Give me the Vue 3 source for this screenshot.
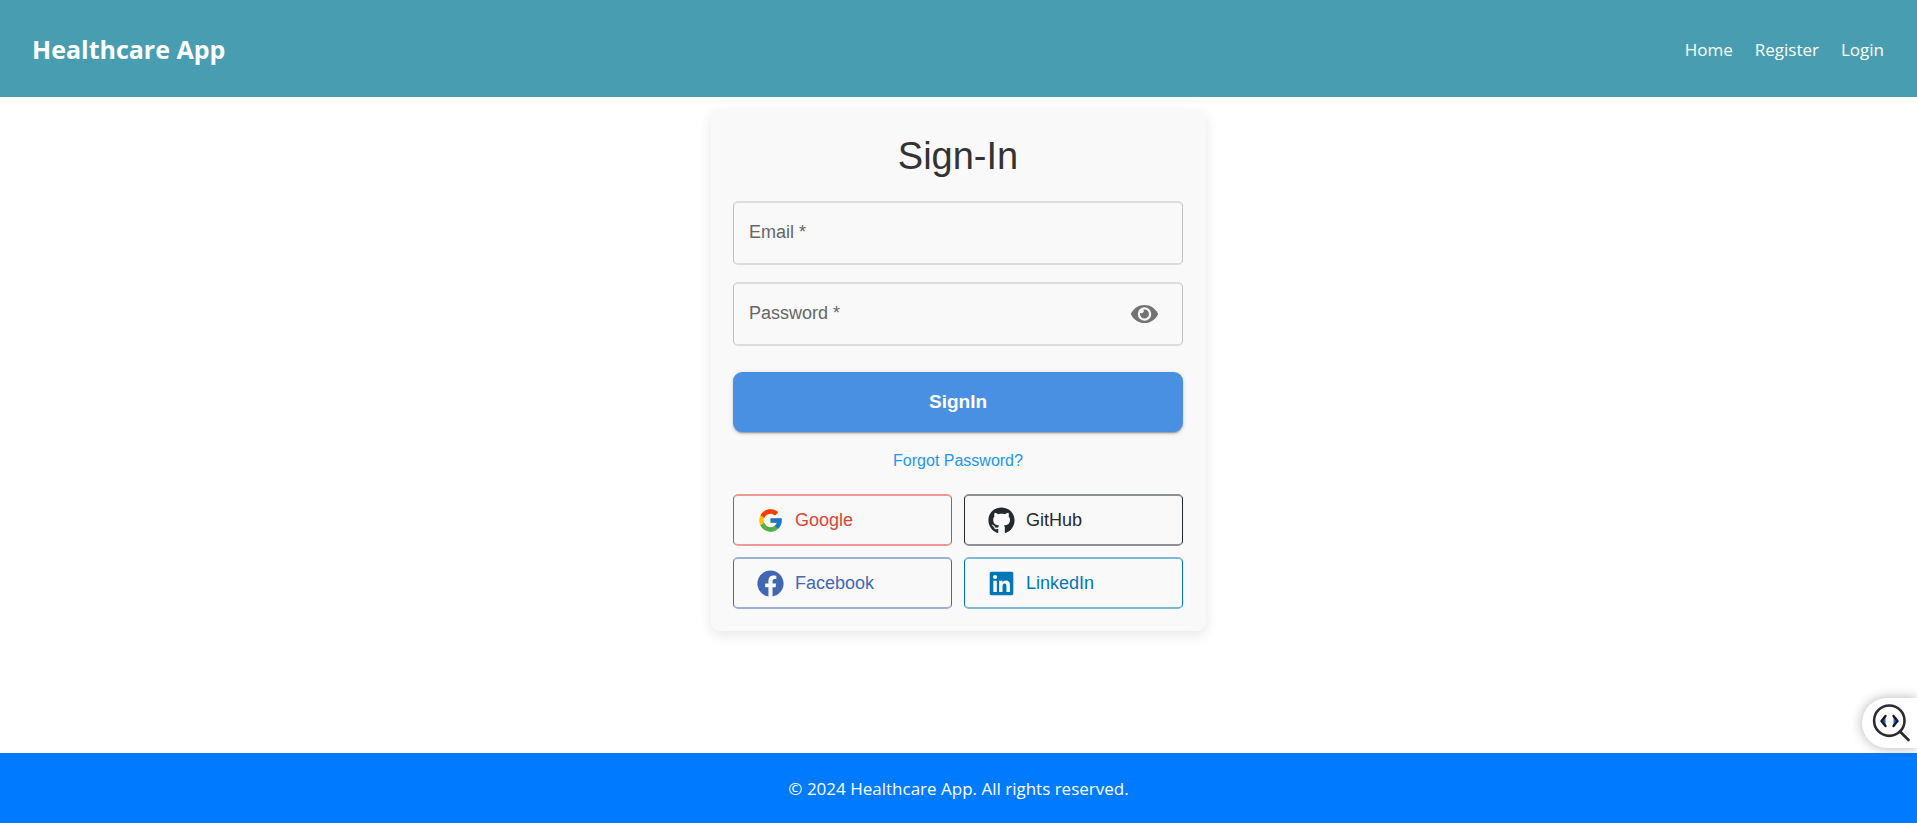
<script setup>
import { ref } from 'vue'

const email = ref('')
const password = ref('')
const showPassword = ref(false)

const links = ['Home', 'Register', 'Login']

const providers = [
  {
    id: 'google',
    name: 'Google',
    viewBox: '0 0 48 48',
    paths: [
      { fill: '#FFC107', d: 'M43.611,20.083H42V20H24v8h11.303c-1.649,4.657-6.08,8-11.303,8c-6.627,0-12-5.373-12-12c0-6.627,5.373-12,12-12c3.059,0,5.842,1.154,7.961,3.039l5.657-5.657C34.046,6.053,29.268,4,24,4C12.955,4,4,12.955,4,24c0,11.045,8.955,20,20,20c11.045,0,20-8.955,20-20C44,22.659,43.862,21.35,43.611,20.083z' },
      { fill: '#FF3D00', d: 'M6.306,14.691l6.571,4.819C14.655,15.108,18.961,12,24,12c3.059,0,5.842,1.154,7.961,3.039l5.657-5.657C34.046,6.053,29.268,4,24,4C16.318,4,9.656,8.337,6.306,14.691z' },
      { fill: '#4CAF50', d: 'M24,44c5.166,0,9.86-1.977,13.409-5.192l-6.19-5.238C29.211,35.091,26.715,36,24,36c-5.202,0-9.619-3.317-11.283-7.946l-6.522,5.025C9.505,39.556,16.227,44,24,44z' },
      { fill: '#1976D2', d: 'M43.611,20.083H42V20H24v8h11.303c-0.792,2.237-2.231,4.166-4.087,5.571c0.001-0.001,0.002-0.001,0.003-0.002l6.19,5.238C36.971,39.205,44,34,44,24C44,22.659,43.862,21.35,43.611,20.083z' }
    ]
  },
  {
    id: 'github',
    name: 'GitHub',
    viewBox: '0 0 496 512',
    paths: [
      { fill: 'currentColor', d: 'M165.9 397.4c0 2-2.3 3.6-5.2 3.6-3.3.3-5.6-1.3-5.6-3.6 0-2 2.3-3.6 5.2-3.6 3-.3 5.6 1.3 5.6 3.6zm-31.1-4.5c-.7 2 1.3 4.3 4.3 4.9 2.6 1 5.6 0 6.2-2s-1.3-4.3-4.3-5.2c-2.6-.7-5.5.3-6.2 2.3zm44.2-1.7c-2.9.7-4.9 2.6-4.6 4.9.3 2 2.9 3.3 5.9 2.6 2.9-.7 4.9-2.6 4.6-4.6-.3-1.9-3-3.2-5.9-2.9zM244.8 8C106.1 8 0 113.3 0 252c0 110.9 69.8 205.8 169.5 239.2 12.8 2.3 17.3-5.6 17.3-12.1 0-6.2-.3-40.4-.3-61.4 0 0-70 15-84.7-29.8 0 0-11.4-29.1-27.8-36.6 0 0-22.9-15.7 1.6-15.4 0 0 24.9 2 38.6 25.8 21.9 38.6 58.6 27.5 72.9 20.9 2.3-16 8.8-27.1 16-33.7-55.9-6.2-112.3-14.3-112.3-110.5 0-27.5 7.6-41.3 23.6-58.9-2.6-6.5-11.1-33.3 2.6-67.9 20.9-6.5 69 27 69 27 20-5.6 41.5-8.5 62.8-8.5s42.8 2.9 62.8 8.5c0 0 48.1-33.6 69-27 13.7 34.7 5.2 61.4 2.6 67.9 16 17.7 25.8 31.5 25.8 58.9 0 96.5-58.9 104.2-114.8 110.5 9.2 7.9 17 22.9 17 46.4 0 33.7-.3 75.4-.3 83.6 0 6.5 4.6 14.4 17.3 12.1C428.2 457.8 496 362.9 496 252 496 113.3 383.5 8 244.8 8zM97.2 352.9c-1.3 1-1 3.3.7 5.2 1.6 1.6 3.9 2.3 5.2 1 1.3-1 1-3.3-.7-5.2-1.6-1.6-3.9-2.3-5.2-1zm-10.8-8.1c-.7 1.3.3 2.9 2.3 3.9 1.6 1 3.6.7 4.3-.7.7-1.3-.3-2.9-2.3-3.9-2-.6-3.6-.3-4.3.7zm32.4 35.6c-1.6 1.3-1 4.3 1.3 6.2 2.3 2.3 5.2 2.6 6.5 1 1.3-1.3.7-4.3-1.3-6.2-2.2-2.3-5.2-2.6-6.5-1zm-11.4-14.7c-1.6 1-1.6 3.6 0 5.9 1.6 2.3 4.3 3.3 5.6 2.3 1.6-1.3 1.6-3.9 0-6.2-1.4-2.3-4-3.3-5.6-2z' }
    ]
  },
  {
    id: 'facebook',
    name: 'Facebook',
    viewBox: '0 0 512 512',
    paths: [
      { fill: 'currentColor', d: 'M504 256C504 119 393 8 256 8S8 119 8 256c0 123.78 90.69 226.38 209.25 245V327.69h-63V256h63v-54.64c0-62.15 37-96.48 93.67-96.48 27.14 0 55.52 4.84 55.52 4.84v61h-31.28c-30.8 0-40.41 19.12-40.41 38.73V256h68.78l-11 71.69h-57.78V501C413.31 482.38 504 379.78 504 256z' }
    ]
  },
  {
    id: 'linkedin',
    name: 'LinkedIn',
    viewBox: '0 0 448 512',
    paths: [
      { fill: 'currentColor', d: 'M416 32H31.9C14.3 32 0 46.5 0 64.3v383.4C0 465.5 14.3 480 31.9 480H416c17.6 0 32-14.5 32-32.3V64.3c0-17.8-14.4-32.3-32-32.3zM135.4 416H69V202.2h66.5V416zm-33.2-243c-21.3 0-38.5-17.3-38.5-38.5S80.9 96 102.2 96c21.2 0 38.5 17.3 38.5 38.5 0 21.3-17.2 38.5-38.5 38.5zm282.1 243h-66.4V312c0-24.8-.5-56.7-34.5-56.7-34.6 0-39.9 27-39.9 54.9V416h-66.4V202.2h63.7v29.2h.9c8.9-16.8 30.6-34.5 62.9-34.5 67.2 0 79.7 44.3 79.7 101.9V416z' }
    ]
  }
]
</script>

<template>
  <div class="page">
    <header class="header">
      <h1 class="brand">Healthcare App</h1>
      <nav class="nav">
        <a v-for="link in links" :key="link" href="#">{{ link }}</a>
      </nav>
    </header>

    <main class="main">
      <form class="card" @submit.prevent>
        <h2 class="title">Sign-In</h2>

        <div class="field">
          <input id="email" v-model="email" type="email" required placeholder=" " />
          <label for="email">Email *</label>
        </div>

        <div class="field">
          <input
            id="password"
            v-model="password"
            :type="showPassword ? 'text' : 'password'"
            required
            placeholder=" "
          />
          <label for="password">Password *</label>
          <button
            class="eye"
            type="button"
            aria-label="Toggle password visibility"
            @click="showPassword = !showPassword"
          >
            <svg viewBox="0 0 576 512" aria-hidden="true">
              <path fill="currentColor" d="M572.52 241.4C518.29 135.59 410.93 64 288 64S57.68 135.64 3.48 241.41a32.35 32.35 0 0 0 0 29.19C57.71 376.41 165.07 448 288 448s230.32-71.64 284.52-177.41a32.35 32.35 0 0 0 0-29.19zM288 400a144 144 0 1 1 144-144 143.93 143.93 0 0 1-144 144zm0-240a95.31 95.31 0 0 0-25.31 3.79 47.85 47.85 0 0 1-66.9 66.9A95.78 95.78 0 1 0 288 160z" />
            </svg>
          </button>
        </div>

        <button class="submit" type="submit">SignIn</button>

        <a class="forgot" href="#">Forgot Password?</a>

        <div class="providers">
          <button
            v-for="provider in providers"
            :key="provider.id"
            type="button"
            class="provider"
            :class="provider.id"
          >
            <svg :viewBox="provider.viewBox" aria-hidden="true">
              <path v-for="(path, i) in provider.paths" :key="i" :fill="path.fill" :d="path.d" />
            </svg>
            <span>{{ provider.name }}</span>
          </button>
        </div>
      </form>
    </main>

    <footer class="footer">
      <p>© 2024 Healthcare App. All rights reserved.</p>
    </footer>

    <button class="inspector" type="button" aria-label="Inspect code">
      <svg viewBox="0 0 40 40" aria-hidden="true">
        <circle cx="17.3" cy="17.7" r="15.2" fill="none" stroke="#2b2c2f" stroke-width="2.6" />
        <path d="M28 28.5L36.5 37" fill="none" stroke="#2b2c2f" stroke-width="2.8" stroke-linecap="round" />
        <path d="M13.5 13.5L10 18L13.5 22.5Z" fill="#1769f5" />
        <path d="M21.5 13.5L25 18L21.5 22.5Z" fill="#1769f5" />
        <path d="M13.5 13L9.5 18L13.5 23M21.5 13L25.5 18L21.5 23" fill="none" stroke="#17191d" stroke-width="2.4" stroke-linecap="round" stroke-linejoin="round" />
      </svg>
    </button>
  </div>
</template>

<style>
body {
  margin: 0;
  background: #fff;
}
</style>

<style scoped>
* {
  box-sizing: border-box;
}

.page {
  display: flex;
  flex-direction: column;
  min-height: 100vh;
  font-family: "Segoe UI", "Open Sans", "Noto Sans", sans-serif;
  font-size: 17px;
  line-height: 26px;
}

.header {
  display: flex;
  align-items: center;
  justify-content: space-between;
  padding: 33px 33px 31px 32px;
  color: #fff;
  background: #489eb0;
}

.brand {
  margin: 0;
  font-size: 25px;
  line-height: 33px;
  font-weight: 700;
}

.nav {
  display: flex;
  gap: 22px;
}

.nav a {
  color: #fff;
  text-decoration: none;
}

.main {
  flex: 1;
  padding: 13px 16px;
  font-family: Arial, "Liberation Sans", sans-serif;
}

.card {
  display: flex;
  flex-direction: column;
  max-width: 495px;
  margin: 0 auto;
  padding: 22px 23px 22px 22px;
  border-radius: 9px;
  background: #f9f9f9;
  box-shadow: 0 4px 13px rgba(0, 0, 0, 0.1);
}

.title {
  margin: 0 0 21px;
  color: #333;
  font-size: 38px;
  line-height: 48px;
  font-weight: 400;
  text-align: center;
}

.field {
  position: relative;
  margin-bottom: 17px;
}

.field input {
  display: block;
  width: 100%;
  height: 64px;
  padding: 0 15px;
  border: solid;
  border-width: 2px 1px;
  border-color: #dcdcdc #bfbfbf;
  border-radius: 5px;
  outline: none;
  color: #222;
  background: transparent;
  font: inherit;
  font-size: 18px;
}

.field input:focus {
  border-color: #1976d2;
}

.field label {
  position: absolute;
  top: 18px;
  left: 16px;
  color: #666;
  font-size: 18px;
  line-height: 26px;
  pointer-events: none;
}

.field input:focus + label,
.field input:not(:placeholder-shown) + label {
  top: -12px;
  padding: 0 4px;
  background: #f9f9f9;
  font-size: 13px;
}

.eye {
  position: absolute;
  top: 12px;
  right: 19px;
  display: flex;
  align-items: center;
  justify-content: center;
  width: 40px;
  height: 40px;
  padding: 0;
  border: 0;
  border-radius: 50%;
  color: #737373;
  background: none;
  cursor: pointer;
}

.eye svg {
  width: 27px;
  height: 24px;
}

.submit {
  height: 60px;
  margin-top: 9px;
  border: 0;
  border-radius: 9px;
  color: #fff;
  background: #4a90e2;
  box-shadow: 0 3px 1px -2px rgba(0, 0, 0, 0.2), 0 2px 2px rgba(0, 0, 0, 0.14), 0 1px 5px rgba(0, 0, 0, 0.12);
  font: inherit;
  font-size: 19px;
  font-weight: 700;
  cursor: pointer;
}

.forgot {
  align-self: center;
  margin: 17px 0 21px;
  color: #2196f3;
  font-size: 16px;
  line-height: 24px;
  text-decoration: none;
}

.providers {
  display: grid;
  grid-template-columns: 1fr 1fr;
  gap: 11px 12px;
}

.provider {
  display: flex;
  align-items: center;
  gap: 11px;
  height: 52px;
  padding: 0 23px;
  border: solid;
  border-width: 2px 1px;
  border-radius: 5px;
  background: none;
  font: inherit;
  font-size: 18px;
  cursor: pointer;
}

.provider svg {
  width: 27px;
  height: 27px;
}

.provider.google {
  border-color: #eb9b94 #db4437;
  color: #db4437;
}

.provider.github {
  border-color: #8e9194 #24292e;
  color: #24292e;
}

.provider.facebook {
  border-color: #9db0d6 #4267b2;
  color: #4267b2;
}

.provider.linkedin {
  border-color: #7cb8d7 #0077b5;
  color: #0077b5;
}

.footer {
  padding: 23px 22px 21px;
  color: #fff;
  background: #007bff;
  text-align: center;
}

.footer p {
  margin: 0;
}

.inspector {
  position: fixed;
  right: 0;
  bottom: 75px;
  display: flex;
  align-items: center;
  width: 55px;
  height: 50px;
  padding: 0 5px 0 10px;
  border: 0;
  border-radius: 25px 0 0 25px;
  background: #fff;
  box-shadow: 0 0 12px rgba(0, 0, 0, 0.3);
  cursor: pointer;
}

.inspector svg {
  width: 40px;
  height: 40px;
}
</style>
